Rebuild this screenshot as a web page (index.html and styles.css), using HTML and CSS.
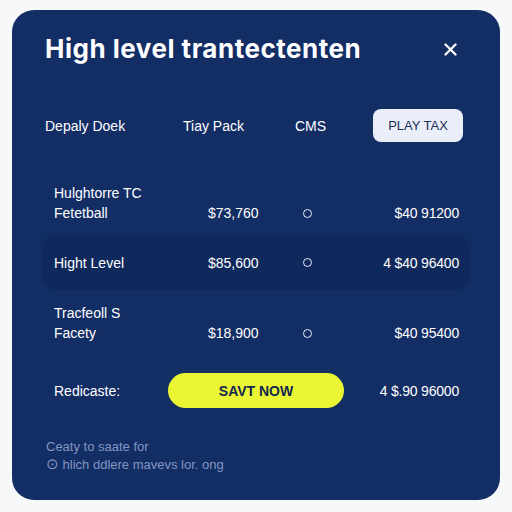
FILE: index.html
```html
<!DOCTYPE html>
<html>
<head>
  <title>High level trantectenten</title>
  <meta name="viewport" content="width=device-width, initial-scale=1.0">
  <link rel="stylesheet" href="styles.css">
</head>
<body>
  <div class="card">
    <div class="head">
      <h2 class="title">High level trantectenten</h2>
      <button class="close" aria-label="Close">
        <svg width="13" height="13" viewBox="0 0 13 13"><path d="M1.5 1.5L11.5 11.5M11.5 1.5L1.5 11.5" stroke="#fff" stroke-width="2.3" stroke-linecap="round"/></svg>
      </button>
    </div>

    <div class="nav">
      <span>Depaly Doek</span>
      <span>Tiay Pack</span>
      <span>CMS</span>
      <button class="nav-btn">PLAY TAX</button>
    </div>

    <div class="rows">
      <div class="row first">
        <div class="label">Hulghtorre TC<br>Fetetball</div>
        <div class="price">$73,760</div>
        <div class="dot"><span></span></div>
        <div class="value">$40 91200</div>
      </div>
      <div class="row active">
        <div class="label">Hight Level</div>
        <div class="price">$85,600</div>
        <div class="dot"><span></span></div>
        <div class="value">4 $40 96400</div>
      </div>
      <div class="row third">
        <div class="label">Tracfeoll S<br>Facety</div>
        <div class="price">$18,900</div>
        <div class="dot"><span></span></div>
        <div class="value">$40 95400</div>
      </div>
      <div class="row total">
        <div class="label">Redicaste:</div>
        <button class="save">SAVT NOW</button>
        <div class="value">4 $.90 96000</div>
      </div>
    </div>

    <p class="foot">
      Ceaty to saate for<br>
      <span class="foot-icon">⊙</span> hlich ddlere mavevs lor. ong
    </p>
  </div>
</body>
</html>
```

FILE: styles.css
```css
body {
  margin: 0;
  padding: 10px 12px;
  background: #f7f8fa;
  font-family: "Liberation Sans", Arial, sans-serif;
}
.card {
  height: 490px;
  box-sizing: border-box;
  background: #132d65;
  border-radius: 22px;
  padding: 25px 32px 0 33px;
  color: #fff;
}
.head {
  display: flex;
  justify-content: space-between;
  align-items: center;
}
.title {
  margin: 0;
  font-family: Inter, "Noto Sans", sans-serif;
  font-weight: 700;
  font-size: 26px;
  line-height: 28px;
  letter-spacing: 0.5px;
}
.close {
  background: none;
  border: 0;
  padding: 0;
  margin-right: 11px;
  width: 13px;
  height: 13px;
  display: flex;
}
.nav {
  margin-top: 46px;
  display: grid;
  grid-template-columns: 138px 112px 78px 90px;
  align-items: center;
  font-size: 14px;
}
.nav-btn {
  height: 33px;
  border: 0;
  border-radius: 8px;
  background: #e9eef8;
  color: #1b2c55;
  font-family: "Liberation Sans", Arial, sans-serif;
  font-size: 13px;
}
.rows {
  margin: 38px -1px 0 -2px;
}
.row {
  display: grid;
  grid-template-columns: 154px 84px 30px 1fr;
  align-items: end;
  padding: 0 10px 0 11px;
  font-size: 14px;
  line-height: 20px;
}
.row.first {
  padding-top: 3px;
  padding-bottom: 12px;
}
.row.active {
  height: 55px;
  box-sizing: border-box;
  align-items: center;
  background: #10295c;
  border-radius: 12px;
}
.row.third {
  padding-top: 13px;
}
.row.total {
  margin-top: 30px;
  grid-template-columns: 114px 176px 1fr;
  align-items: center;
}
.value {
  text-align: right;
  letter-spacing: -0.2px;
}
.dot {
  display: flex;
  justify-content: center;
  align-items: center;
  height: 20px;
}
.dot span {
  width: 7px;
  height: 7px;
  border: 1.6px solid #e8eefc;
  border-radius: 50%;
}
.save {
  height: 35px;
  border: 0;
  border-radius: 18px;
  background: #eaf534;
  color: #13264f;
  font-family: "Liberation Sans", Arial, sans-serif;
  font-weight: 700;
  font-size: 14px;
}
.foot {
  margin: 30px 0 0 1px;
  font-size: 13px;
  line-height: 17px;
  color: #8496c2;
}
.foot-icon {
  font-size: 15px;
}
```
